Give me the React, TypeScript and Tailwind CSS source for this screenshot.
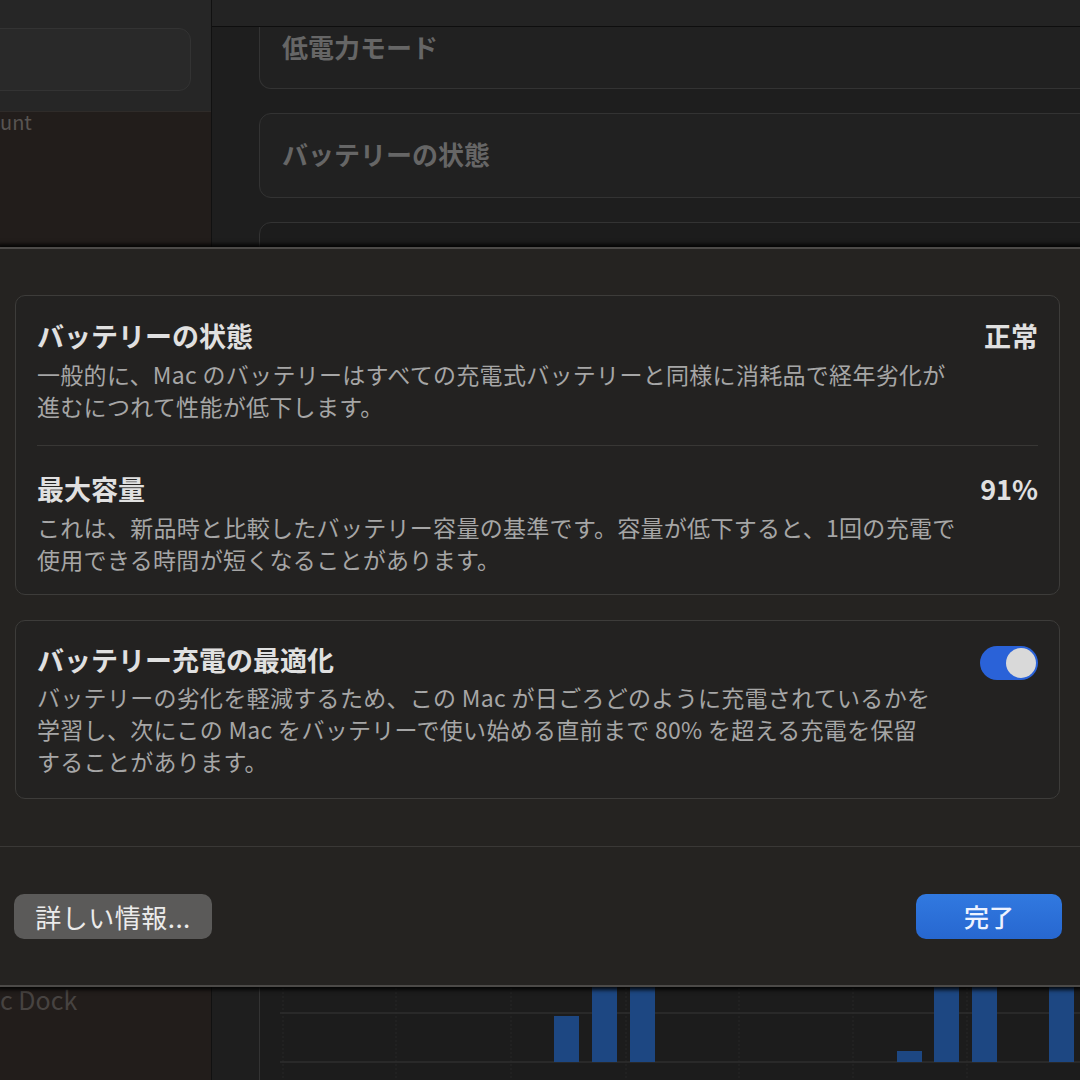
import React from "react";

const FONT = { fontFamily: '"Noto Sans CJK JP", "Noto Sans", "Liberation Sans", sans-serif' };

function Toggle() {
  return (
    <div className="mt-[2px] flex h-[34px] w-[58px] shrink-0 items-center justify-end rounded-full bg-[#2a62d8] pr-[2px]">
      <div className="h-[30px] w-[30px] rounded-full bg-[#d9d9d9]" />
    </div>
  );
}

function Chart() {
  const bars = [
    { x: 274, y: 32 },
    { x: 312, y: 0 },
    { x: 350, y: 0 },
    { x: 617, y: 67 },
    { x: 654, y: 0 },
    { x: 692, y: 0 },
    { x: 769, y: 0 },
  ];
  const vlines = [3, 116, 231, 346, 459, 573, 687];
  return (
    <svg width="800" height="95" viewBox="0 0 800 95" className="mt-auto mb-[20px] block shrink-0">
      {vlines.map((x) => (
        <line key={x} x1={x} y1={0} x2={x} y2={95} stroke="#262626" strokeWidth="1" strokeDasharray="2 2" />
      ))}
      <line x1={0} y1={29} x2={800} y2={29} stroke="#2e2e2e" strokeWidth="1.5" />
      <line x1={0} y1={78} x2={800} y2={78} stroke="#2e2e2e" strokeWidth="1.5" />
      {bars.map((b) => (
        <rect key={b.x} x={b.x} y={b.y} width={25} height={78 - b.y} fill="#1d4782" />
      ))}
    </svg>
  );
}

export default function App() {
  return (
    <div className="relative h-[1080px] w-[1080px] overflow-hidden bg-[#1e1e1e]" style={FONT}>
      {/* background window */}
      <div className="flex h-full w-full">
        <div className="flex w-[212px] shrink-0 flex-col border-r border-[#111]">
          <div className="h-[112px] border-b border-[#2f2b29] bg-[#262626] pt-[28px]">
            <div className="-ml-[14px] h-[63px] w-[205px] rounded-[12px] border border-[#333] bg-[#292929]" />
          </div>
          <div className="flex flex-1 flex-col bg-[#221d1b]">
            <div className="text-[20px] leading-[20px] text-[#585452]">unt</div>
            <div className="mt-auto mb-[66px] text-[25px] leading-[30px] text-[#474341]">c Dock</div>
          </div>
        </div>
        <div className="flex flex-1 flex-col">
          <div className="relative z-10 h-[27px] shrink-0 border-b border-[#0e0e0e] bg-[#232323]" />
          <div className="-mr-[30px] flex flex-1 flex-col pl-[47px]">
            <div className="h-[62px] shrink-0 rounded-b-[12px] border border-t-0 border-[#333] bg-[#212121] pl-[22px] pt-[4px]">
              <div className="text-[26px] font-bold leading-[32px] text-[#666]">低電力モード</div>
            </div>
            <div className="mt-[24px] flex h-[85px] shrink-0 items-center rounded-[12px] border border-[#333] bg-[#212121] pl-[22px]">
              <div className="-mt-[3px] text-[26px] font-bold leading-[32px] text-[#666]">バッテリーの状態</div>
            </div>
            <div className="-mb-[20px] mt-[24px] flex flex-1 flex-col rounded-[12px] border border-[#333] bg-[#1c1c1c] pl-[20px]">
              <Chart />
            </div>
          </div>
        </div>
      </div>

      {/* sheet */}
      <div className="absolute inset-x-0 top-[247px] flex h-[740px] flex-col border-y-2 border-[#4c4a48] bg-[#252321] shadow-[0_0_4px_3px_rgba(0,0,0,0.85)]">
        <div className="pl-[15px] pr-[20px] pt-[46px]">
          <div className="rounded-[10px] border border-[#3d3c3a] bg-[#232221] px-[21px] pb-[19px] pt-[24px]">
            <div className="flex items-start justify-between">
              <div>
                <div className="text-[27px] font-bold leading-[32px] text-[#e0e0e0]">バッテリーの状態</div>
                <div className="mt-[6px] whitespace-nowrap text-[23px] leading-[32px] tracking-[0.3px] text-[#a6a6a6]">
                  一般的に、Mac のバッテリーはすべての充電式バッテリーと同様に消耗品で経年劣化が
                  <br />
                  進むにつれて性能が低下します。
                </div>
              </div>
              <div className="text-[27px] font-bold leading-[32px] text-[#e0e0e0]">正常</div>
            </div>
            <div className="mt-[23px] h-px bg-[#383735]" />
            <div className="mt-[27px] flex items-start justify-between">
              <div>
                <div className="text-[27px] font-bold leading-[32px] text-[#e0e0e0]">最大容量</div>
                <div className="mt-[6px] whitespace-nowrap text-[23px] leading-[32px] tracking-[0.3px] text-[#a6a6a6]">
                  これは、新品時と比較したバッテリー容量の基準です。容量が低下すると、1回の充電で
                  <br />
                  使用できる時間が短くなることがあります。
                </div>
              </div>
              <div className="text-[27px] font-bold leading-[32px] text-[#e0e0e0]">91%</div>
            </div>
          </div>

          <div className="mt-[25px] rounded-[10px] border border-[#3d3c3a] bg-[#232221] px-[21px] pb-[21px] pt-[23px]">
            <div className="flex items-start justify-between">
              <div>
                <div className="text-[27px] font-bold leading-[32px] text-[#e0e0e0]">バッテリー充電の最適化</div>
                <div className="mt-[5px] whitespace-nowrap text-[23px] leading-[32px] tracking-[0.3px] text-[#a6a6a6]">
                  バッテリーの劣化を軽減するため、この Mac が日ごろどのように充電されているかを
                  <br />
                  学習し、次にこの Mac をバッテリーで使い始める直前まで 80% を超える充電を保留
                  <br />
                  することがあります。
                </div>
              </div>
              <Toggle />
            </div>
          </div>
        </div>

        <div className="mt-[47px] h-px shrink-0 bg-[#3a3836]" />

        <div className="flex items-center justify-between pl-[14px] pr-[18px] pt-[47px]">
          <button className="flex h-[45px] w-[198px] items-center justify-center rounded-[10px] bg-[#5b5a59] text-[26px] tracking-[0.5px] text-[#ebebeb]">
            詳しい情報...
          </button>
          <button className="flex h-[45px] w-[146px] items-center justify-center rounded-[10px] bg-gradient-to-b from-[#3179e0] to-[#2767d0] text-[25px] font-medium text-[#eef3ff]">
            完了
          </button>
        </div>
      </div>
    </div>
  );
}
